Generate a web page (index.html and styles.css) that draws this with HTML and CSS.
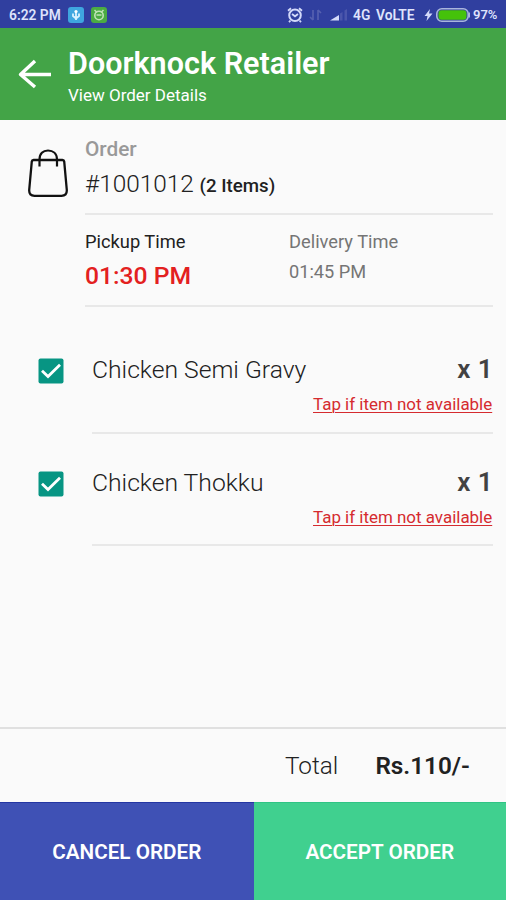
FILE: index.html
```html
<!DOCTYPE html>
<html lang="en">
<head>
<meta charset="utf-8">
<title>Doorknock Retailer</title>
<link rel="stylesheet" href="styles.css">
</head>
<body>
<div class="status">
  <span class="clock">6:22 PM</span>
  <svg class="app-usb" width="16" height="16" viewBox="0 0 16 16"><rect width="16" height="16" rx="3" fill="#3fa6df"/><path d="M8 13V4M8 11.500L5 9V6.500M8 11.500L11 9V6.500" fill="none" stroke="#d9f1ff" stroke-width="1.800"/><circle cx="8" cy="4.500" r="1.600" fill="#fff"/></svg>
  <svg class="app-droid" width="16" height="16" viewBox="0 0 16 16"><rect width="16" height="16" rx="3" fill="#4bab43"/><circle cx="8" cy="8.500" r="4.200" fill="none" stroke="#bfe3b5" stroke-width="1.600"/><path d="M3.500 3l2.500 2.500M12.500 3L10 5.500M5.500 8h5" stroke="#bfe3b5" stroke-width="1.500"/></svg>
  <span class="fill"></span>
  <svg class="alarm" width="16" height="16" viewBox="0 0 16 16"><circle cx="8" cy="8.300" r="5.800" fill="none" stroke="#d4dafa" stroke-width="2"/><path d="M1 3.800l3-2.500M15 3.800l-3-2.500M3.500 13.500l-1.500 1.700M12.500 13.500l1.500 1.700M5 7l3 2.300L11 7" fill="none" stroke="#d4dafa" stroke-width="1.800"/></svg>
  <svg class="data" width="13" height="12" viewBox="0 0 13 12"><path d="M4 1v10M4 11L1 8M9 11V1M9 1l3 3" fill="none" stroke="#5560b0" stroke-width="1.700"/></svg>
  <svg class="signal" width="18" height="12" viewBox="0 0 18 12"><path d="M0 11.500L9 6V11.500z" fill="#d4dafa"/><path d="M10 11.500V4.500L12.500 3V11.500zM14.500 11.500V1.500L17 0V11.500z" fill="#4b56ac"/></svg>
  <span class="network">4G</span><span class="volte">VoLTE</span>
  <svg class="bolt" width="9" height="14" viewBox="0 0 9 14"><path d="M6 1L.5 8h3L2.500 13l6-7.500H5z" fill="#d4dafa"/></svg>
  <svg class="battery" width="34" height="14" viewBox="0 0 34 14"><rect x=".8" y=".8" width="31.400" height="12.400" rx="5" fill="none" stroke="#a9b5dc" stroke-width="1.600"/><rect x="2.500" y="2.300" width="28" height="9.400" rx="3" fill="#45c20a"/><path d="M33.300 4.500v5" stroke="#a9b5dc" stroke-width="1.400"/></svg>
  <span class="percent">97%</span>
</div>
<header class="bar">
  <svg class="back" width="34" height="30" viewBox="0 0 34 30"><path d="M33 15.500H2M17 2L2.500 15.500L17 28" fill="none" stroke="#fff" stroke-width="3.400" stroke-linejoin="round"/></svg>
  <div>
    <h1 class="title">Doorknock Retailer</h1>
    <p class="subtitle">View Order Details</p>
  </div>
</header>
<main class="content">
  <section class="summary">
    <svg class="bag" width="40" height="50" viewBox="0 0 40 50"><path d="M5.500 11H34.500Q36 11 36.200 12.500L38.800 41Q39 46.800 33.500 46.800H6.500Q1 46.800 1.200 41L3.800 12.500Q4 11 5.500 11Z" fill="none" stroke="#111" stroke-width="2.300"/><path d="M11.500 17.500V10.500C11.500 4.500 15 1.500 20 1.500S29 4.500 29 10.500V17.500" fill="none" stroke="#111" stroke-width="2.200"/></svg>
    <div class="details">
      <div class="order">
        <div class="order-label">Order</div>
        <div class="order-line"><span class="order-id">#1001012</span><span class="count">(2 Items)</span></div>
      </div>
      <div class="times">
        <div class="pickup"><div class="pickup-label">Pickup Time</div><div class="pickup-time">01:30 PM</div></div>
        <div class="delivery"><div class="delivery-label">Delivery Time</div><div class="delivery-time">01:45 PM</div></div>
      </div>
    </div>
  </section>
  <ul class="items">
    <li class="item">
      <svg class="check" width="26" height="26" viewBox="0 0 26 26"><rect x=".5" y=".5" width="25" height="25" rx="2" fill="#079583"/><path d="M4 12.800L10 18.500L22 6.800" fill="none" stroke="#fff" stroke-width="2.800"/></svg>
      <div class="item-body">
        <div class="item-row"><span class="name">Chicken Semi Gravy</span><span class="qty">x 1</span></div>
        <a class="unavailable">Tap if item not available</a>
      </div>
    </li>
    <li class="item">
      <svg class="check" width="26" height="26" viewBox="0 0 26 26"><rect x=".5" y=".5" width="25" height="25" rx="2" fill="#079583"/><path d="M4 12.800L10 18.500L22 6.800" fill="none" stroke="#fff" stroke-width="2.800"/></svg>
      <div class="item-body">
        <div class="item-row"><span class="name">Chicken Thokku</span><span class="qty">x 1</span></div>
        <a class="unavailable">Tap if item not available</a>
      </div>
    </li>
  </ul>
</main>
<div class="total"><span class="total-label">Total</span><span class="amount">Rs.110/-</span></div>
<footer class="actions">
  <button class="cancel"><span>CANCEL ORDER</span></button>
  <button class="accept"><span>ACCEPT ORDER</span></button>
</footer>
</body>
</html>
```

FILE: styles.css
```css
* { box-sizing: border-box; }
body { margin: 0; width: 506px; height: 900px; overflow: hidden; display: flex; flex-direction: column; background: #fafafa; font-family: Roboto, sans-serif; color: #212121; }
h1, p, ul { margin: 0; padding: 0; }
svg { flex: none; display: block; }
span, div, a { white-space: nowrap; }
.status { height: 28px; flex: none; display: flex; align-items: center; padding: 1px 8px 0 9px; background: #303f9f; color: #dfe3fc; font-size: 13.8px; font-weight: 600; line-height: 28px; }
.clock { width: 52px; }
.app-usb { margin-left: 7px; }
.app-droid { margin-left: 7px; }
.fill { flex: 1; }
.data { margin-left: 6px; }
.signal { margin-left: 8px; }
.network { margin-left: 5px; width: 17px; }
.volte { margin-left: 6px; width: 40px; }
.bolt { margin-left: 8px; }
.battery { margin-left: 3px; }
.percent { margin-left: 3px; width: 25px; font-size: 13px; }
.bar { height: 92px; flex: none; display: flex; padding: 18px 0 0 18px; background: #43a447; color: #fff; }
.back { margin: 13px 16px 0 0; }
.title { font-size: 30.5px; line-height: 36px; font-weight: 600; letter-spacing: .03px; }
.subtitle { font-size: 17px; line-height: 26px; }
.content { flex: 1; }
.summary { display: flex; padding: 16px 13px 0 28px; }
.bag { margin-top: 13px; }
.details { flex: 1; margin-left: 17px; }
.order { height: 79px; border-bottom: 2px solid #e8e8e8; }
.order-label { font-size: 20.8px; line-height: 26px; font-weight: 500; color: #999; }
.order-line { display: flex; align-items: baseline; line-height: 43px; }
.order-id { font-size: 24.4px; width: 114.5px; font-weight: 350; }
.count { font-size: 18.7px; font-weight: 550; }
.times { display: flex; height: 92px; padding-top: 13px; border-bottom: 2px solid #e8e8e8; }
.pickup { width: 204px; }
.pickup-label, .delivery-label { font-size: 18.3px; line-height: 28px; }
.pickup-time { font-size: 24.7px; line-height: 40px; font-weight: 500; color: #e32020; }
.delivery { color: #757575; }
.delivery-time { font-size: 18.2px; line-height: 32px; }
.items { list-style: none; padding: 14px 13px 0 38px; }
.item { height: 112.5px; display: flex; padding-top: 32px; }
.check { margin: 5px 28px 0 0; }
.item-body { flex: 1; border-bottom: 2px solid #e8e8e8; }
.item-row { display: flex; justify-content: space-between; line-height: 33px; }
.name { font-size: 24.7px; font-weight: 340; }
.qty { font-size: 26px; font-weight: 600; letter-spacing: .4px; color: #424242; }
.unavailable { display: block; margin-left: auto; width: 180px; font-size: 16.95px; line-height: 37px; color: #d52b2f; text-decoration: underline; text-decoration-thickness: 1px; text-underline-offset: 2px; }
.total { height: 75px; flex: none; display: flex; border-top: 2px solid #e0e0e0; padding: 0 36px 0 285px; justify-content: space-between; line-height: 74px; font-size: 24.3px; }
.total-label { font-weight: 330; }
.amount { font-weight: 600; }
.actions { height: 98px; flex: none; display: flex; }
.actions button { width: 252.5px; border: 0; border-top: 1px solid; padding: 1px 0 0; font: 600 20.7px Roboto, sans-serif; color: #fff; }
.actions .cancel { width: 253.5px; background: #3f51b5; border-color: #2436a3; }
.actions .accept { background: #40d08f; border-color: #2fc484; }
```
